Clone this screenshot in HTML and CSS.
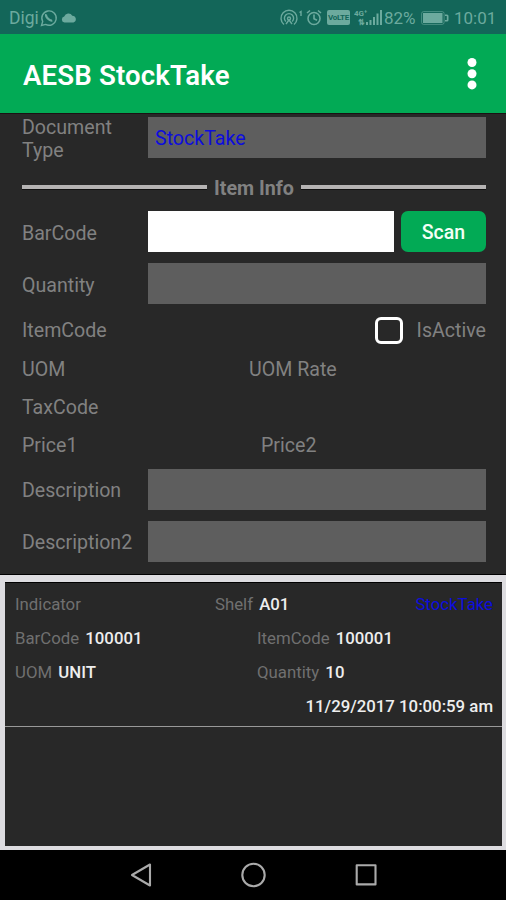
FILE: index.html
```html
<!DOCTYPE html>
<html lang="en">
<head>
<meta charset="utf-8">
<title>AESB StockTake</title>
<link rel="stylesheet" href="styles.css">
</head>
<body>
<div class="status">
  <span class="carrier">Digi</span>
  <svg class="whatsapp" width="18" height="18" viewBox="0 0 18 18" fill="none" stroke="currentColor" stroke-width="1.4"><path d="M1.500 16.500l1.200-4A7.200 7.200 0 1 1 5.600 15.400z"/><path d="M6.200 5.300c-1.100 2.200 3.300 7 6.100 6.200" stroke-width="2.200"/></svg>
  <svg class="cloud" width="16" height="11" viewBox="0 0 16 11" fill="currentColor"><path d="M3.500 10.500a3 3 0 0 1-.3-5.900A4.500 4.500 0 0 1 11.300 3.700a3.500 3.500 0 0 1 1.200 6.800z"/></svg>
  <span class="spacer"></span>
  <svg class="hotspot" width="23" height="18" viewBox="0 0 23 18" fill="none" stroke="currentColor" stroke-width="1.400"><path d="M4 15.500A8 8 0 1 1 14 15.500M5.800 12.500A4.600 4.600 0 1 1 12.200 12.500"/><circle cx="9" cy="9.500" r="1.500"/><path d="M9 11l-3 4M9 11l3 4M19.500 3.500l1.500-1V7"/></svg>
  <svg class="alarm" width="16" height="17" viewBox="0 0 16 17" fill="none" stroke="currentColor" stroke-width="1.600"><circle cx="8" cy="9.500" r="6"/><path d="M8 5.500v4.300l3 1.500M1 4l3-2.500M15 4l-3-2.500"/></svg>
  <span class="volte">VoLTE</span>
  <svg class="signal" width="28" height="17" viewBox="0 0 28 17" fill="currentColor"><text x="0" y="7" class="tiny">4G⁺</text><text x="4" y="15.500" class="tiny">⇅</text><path d="M12 13h2v3h-2zM15.500 11h2v5h-2zM19 8h2v8h-2zM22.500 4.500h2V16h-2zM26 1h2v15h-2z"/></svg>
  <span class="percent">82%</span>
  <svg class="battery" width="28" height="14" viewBox="0 0 28 14" fill="currentColor"><rect x=".6" y=".6" width="22.500" height="12.800" rx="2" fill="none" stroke="currentColor" stroke-width="1" opacity=".6"/><path d="M2 2h19.500v10H2zM24 3.500h2q1.500 0 1.500 1.500v4q0 1.500-1.500 1.500h-2v-1.500h1.800v-4H24z"/></svg>
  <span class="time">10:01</span>
</div>
<header class="appbar">
  <h1>AESB StockTake</h1>
  <svg width="10" height="34" viewBox="0 0 10 34" fill="#fff"><circle cx="5" cy="5.500" r="4.500"/><circle cx="5" cy="16.700" r="4.500"/><circle cx="5" cy="27.900" r="4.500"/></svg>
</header>
<main class="form">
  <div class="row doc"><label>Document<br>Type</label><div class="field"><span class="doctype">StockTake</span></div></div>
  <div class="divider"><span>Item Info</span></div>
  <div class="row"><label>BarCode</label><div class="field editable"></div><button>Scan</button></div>
  <div class="row"><label>Quantity</label><div class="field"></div></div>
  <div class="lines">
    <div class="line first-line"><span class="itemcode">ItemCode</span><span class="check"><i class="box"></i><span class="isactive">IsActive</span></span></div>
    <div class="line"><span class="left">UOM</span><span class="rate">UOM Rate</span></div>
    <div class="line"><span class="tax">TaxCode</span></div>
    <div class="line"><span class="left">Price1</span><span class="price2">Price2</span></div>
  </div>
  <div class="row desc"><label>Description</label><div class="field"></div></div>
  <div class="row desc"><label>Description2</label><div class="field"></div></div>
</main>
<section class="list">
  <article class="item">
    <div class="entry"><span class="indicator">Indicator</span><span class="shelf">Shelf <b>A01</b></span><span class="type">StockTake</span></div>
    <div class="entry"><span class="first">BarCode <b>100001</b></span><span>ItemCode <b>100001</b></span></div>
    <div class="entry"><span class="first">UOM <b>UNIT</b></span><span>Quantity <b>10</b></span></div>
    <div class="entry end"><b>11/29/2017 10:00:59 am</b></div>
  </article>
</section>
<nav class="navbar">
  <svg width="24" height="26" viewBox="0 0 24 26"><path d="M4 13L22 2.500v21z"/></svg>
  <svg width="26" height="26" viewBox="0 0 26 26"><circle cx="13.500" cy="13" r="11.200"/></svg>
  <svg width="24" height="26" viewBox="0 0 24 26"><rect x="2.700" y="3.200" width="18.800" height="19.200"/></svg>
</nav>
</body>
</html>
```
FILE: styles.css
```css
* { box-sizing: border-box; }
body {
  margin: 0;
  width: 506px;
  height: 900px;
  overflow: hidden;
  display: flex;
  flex-direction: column;
  background: #282828;
  color: #818181;
  font-family: Roboto, "Liberation Sans", sans-serif;
  font-size: 19.6px;
}
svg { display: block; flex: none; }
.status {
  height: 34px;
  flex: none;
  padding: 1px 10px 0 9px;
  display: flex;
  align-items: center;
  background: #136659;
  color: #6caa9e;
  font-size: 18px;
  white-space: nowrap;
}
.carrier { width: 31px; padding-top: 1px; font-size: 17.5px; }
.cloud { margin-left: 3px; }
.spacer { flex: 1; }
.alarm { margin-left: 3px; }
.volte {
  width: 23px;
  height: 15px;
  margin: 0 4px 0 5px;
  border-radius: 2px;
  background: #6caa9e;
  color: #136659;
  font-size: 8px;
  font-weight: 700;
  line-height: 15px;
  text-align: center;
  letter-spacing: -0.3px;
}
.tiny { font-size: 8px; font-weight: 700; }
.percent { width: 31px; margin: 0 5px 0 2px; font-size: 17px; }
.battery { margin-left: 1px; }
.time { width: 42px; margin-left: 5px; padding-top: 1px; font-size: 17px; }
.appbar {
  height: 80px;
  flex: none;
  padding: 0 29px 0 23px;
  display: flex;
  align-items: center;
  justify-content: space-between;
  background: #02aa55;
  border-bottom: 1px solid #1b1214;
}
h1 { margin: 3px 0 0; color: #fff; font-size: 27.6px; font-weight: 600; letter-spacing: 0.15px; }
.form { height: 461px; flex: none; padding: 3px 20px 0 22px; border-bottom: 1px solid #000; }
.row { height: 41px; margin-bottom: 11px; display: flex; align-items: center; }
.row label { width: 126px; flex: none; padding-top: 4px; line-height: 23px; }
.doc { margin-bottom: 10px; }
.doc label { padding-top: 3px; }
.desc label { padding-top: 2px; }
.field { height: 41px; flex: 1; display: flex; align-items: center; padding: 2px 7px 0; background: #5e5e5e; }
.doctype { color: #0d0ddd; }
.editable { background: #fff; }
button {
  width: 85px;
  height: 41px;
  margin-left: 7px;
  padding: 2px 0 0;
  border: 0;
  border-radius: 7px;
  background: #02aa55;
  color: #f3fff5;
  font: 500 19.5px Roboto, sans-serif;
}
.divider { height: 38px; margin-bottom: 5px; display: flex; align-items: center; gap: 7px; font-weight: 700; font-size: 19.7px; }
.divider span { padding-top: 2px; }
.divider::before, .divider::after { content: ""; height: 4px; flex: 1; background: #b5b3b3; border-bottom: 1px solid #111; }
.lines { margin: -4px 0 5px; padding-top: 1px; }
.line { height: 38px; display: flex; align-items: center; }
.first-line { padding-bottom: 2px; }
.left { width: 227px; }
.price2 { margin-left: 12px; }
.check { margin-left: auto; display: flex; align-items: center; gap: 14px; }
.box { width: 28px; height: 27px; border: 3px solid #fff; border-radius: 6px; }
.list { height: 275px; flex: none; border: solid #dddce0; border-width: 7px 4px 4px 5px; }
.item { height: 145px; padding: 4px 5px 0 10px; border-bottom: 1px solid #999; font-size: 16.8px; color: #707070; box-shadow: inset 0 1px #000; }
.entry { height: 34.2px; padding: 1px 4px 0 0; display: flex; align-items: center; white-space: nowrap; }
.entry b { font-weight: 500; color: #eee; margin-left: 2px; }
.indicator { width: 200px; }
.first { width: 242px; }
.type { margin-left: auto; color: #0d0ddd; }
.end { justify-content: flex-end; }
.navbar { height: 50px; flex: none; display: flex; justify-content: center; gap: 88px; align-items: center; background: #000; }
.navbar svg { fill: none; stroke: #aaa; stroke-width: 2.1; stroke-linejoin: round; }
```
